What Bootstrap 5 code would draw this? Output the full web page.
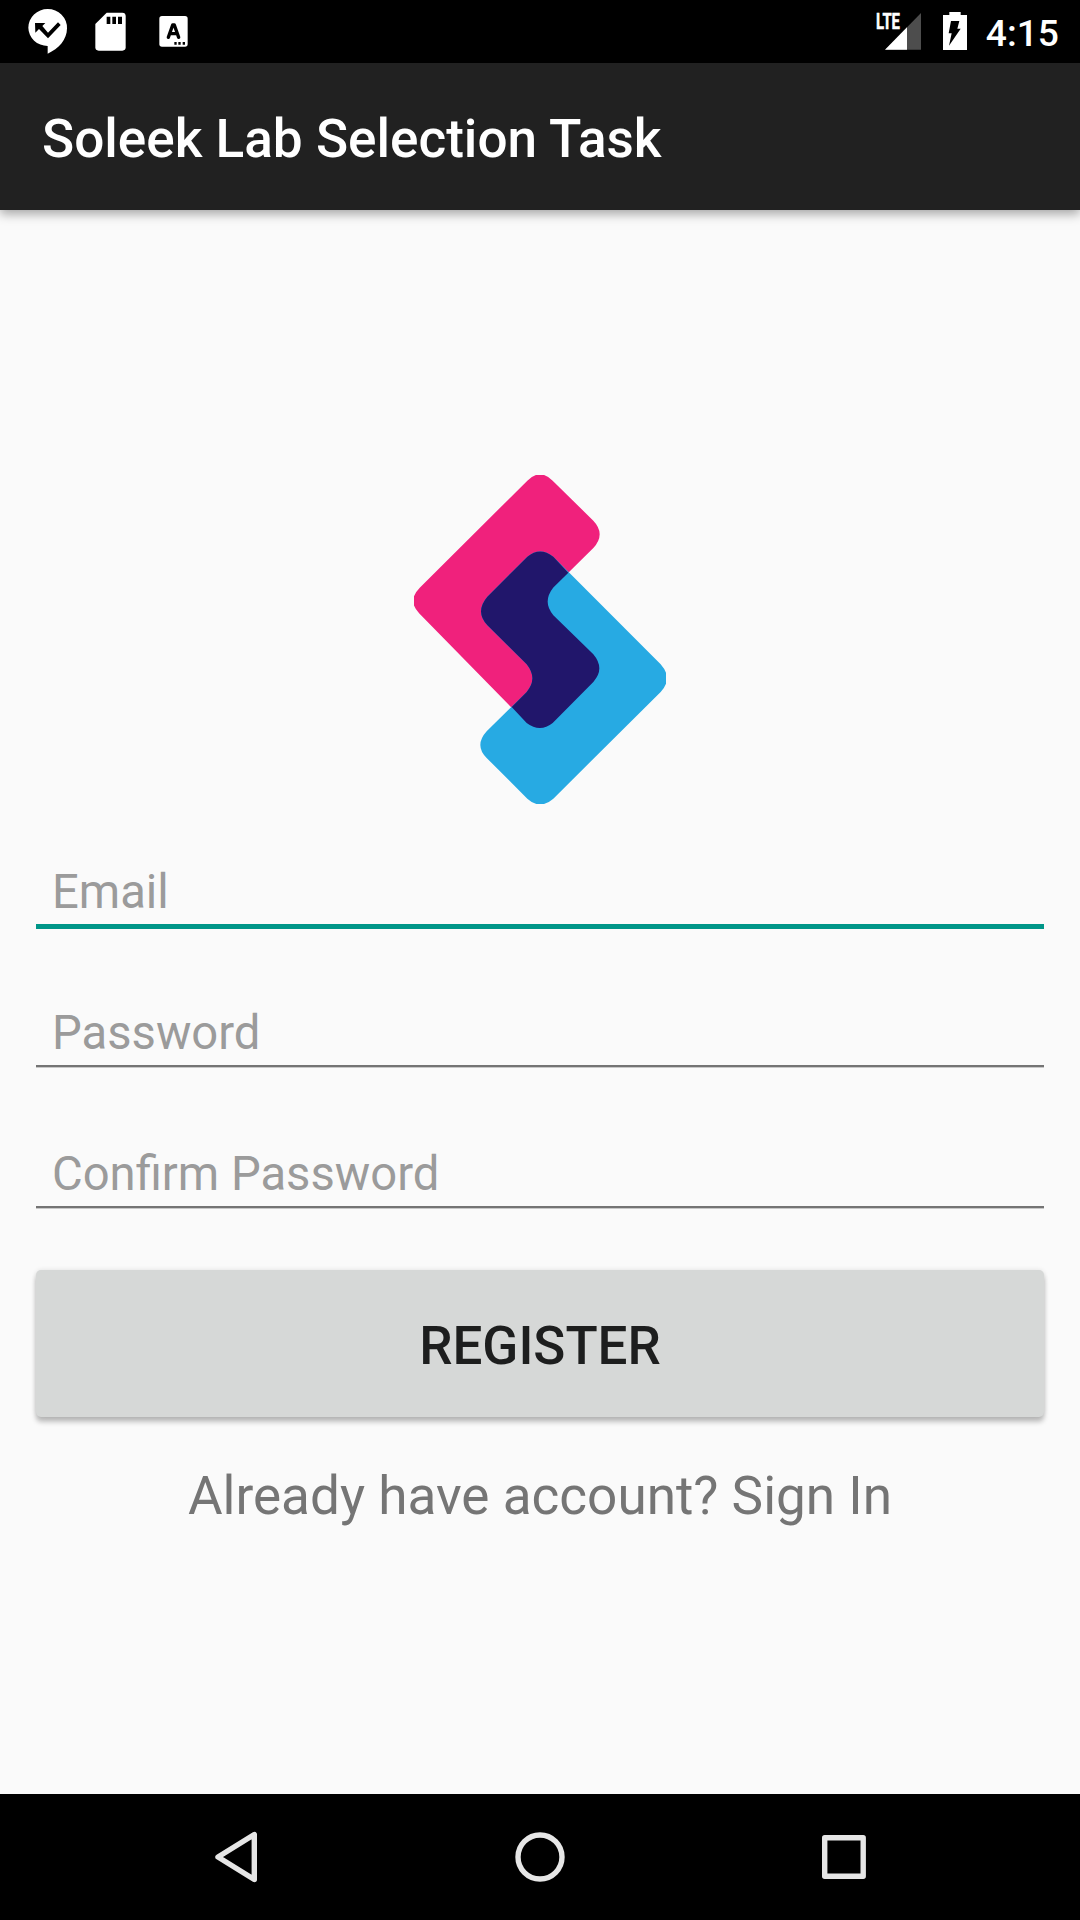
<!DOCTYPE html>
<html lang="en">
<head>
<meta charset="utf-8">
<meta name="viewport" content="width=device-width, initial-scale=1">
<title>Soleek Lab Selection Task</title>
<link href="https://cdn.jsdelivr.net/npm/bootstrap@5.3.0/dist/css/bootstrap.min.css" rel="stylesheet">
<style>
  body { font-family: Roboto, "Noto Sans", sans-serif; background: #fafafa; }
  .screen { width: 1080px; height: 1920px; }
  .status-bar { height: 63px; padding: 0 21px 0 16px; background: #000; color: #fff; }
  .status-bar svg { display: block; height: 63px; }
  .clock { font-size: 37.2px; font-weight: 500; line-height: 63px; padding-top: 2px; margin-left: 6px; height: 63px; }
  .app-bar { height: 147px; padding: 0 42px; background: #212121; box-shadow: 0 4px 10px rgba(0,0,0,.34); z-index: 1; }
  .app-title { font-size: 53.1px; font-weight: 500; line-height: 62px; color: #fff; margin: 4px 0 0; }
  .content { padding: 265px 36px 0; }
  .logo { width: 252px; height: 329px; }
  .fields { padding-top: 47px; }
  .field { height: 141px; }
  .field.last-field { height: 137px; }
  .field .form-control { height: 100%; padding: 9px 16px 0; border: 0; border-radius: 0; background: transparent; box-shadow: none; font-size: 47.2px; line-height: 56px; }
  .field .form-control::placeholder { color: #9b9b9b; opacity: 1; }
  .field-box { height: 75px; border-bottom: 2px solid #747474; box-shadow: 0 1px 0 #c8c8c8; }
  .field-box.active { border-bottom: 5px solid #009688; height: 78px; margin-bottom: -3px; box-shadow: none; }
  .btn-register { height: 147px; border: 0; border-radius: 5px; background: #d6d8d7; color: #1d1e1e; font-size: 52.9px; font-weight: 500; line-height: 62px; padding: 5px 0 0; box-shadow: 0 5px 5px rgba(0,0,0,.24), 0 0 5px rgba(0,0,0,.1); }
  .signin { font-size: 53.1px; line-height: 62px; color: #757575; margin-top: 48px; }
  .nav-keys { height: 126px; background: #000; }
  .nav-keys svg { width: 304px; height: 126px; fill: none; stroke: #e6e6e6; stroke-width: 5.4; stroke-linejoin: round; }
</style>
</head>
<body>
<div class="screen d-flex flex-column overflow-hidden">
  <header class="status-bar d-flex justify-content-between flex-shrink-0">
    <div class="d-flex">
      <svg width="63" viewBox="48 0 189 189">
        <path fill="#fff" d="M143 27a58 56 0 0 1 58 58c0 34-25 62-58 76v-23a58 56 0 0 1-58-55a58 56 0 0 1 58-56z"/>
        <path fill="#000" d="M105 69h31l-9 9 17 20 30-31 8 8-38 40-27-28-11 11z"/>
      </svg>
      <svg width="63" viewBox="237 0 189 189">
        <path fill="#fff" d="M320 38h47q10 0 10 10v94q0 10-10 10h-71q-10 0-10-10V72z"/>
        <path fill="#000" d="M320 50h11v22h-11zM337 50h11v22h-11zM354 50h12v22h-12z"/>
      </svg>
      <svg width="63" viewBox="426 0 189 189">
        <rect x="478" y="48" width="85" height="92" rx="8" fill="#fff"/>
        <path fill="none" stroke="#000" stroke-width="10" stroke-linecap="round" stroke-linejoin="round" d="M505 112l13-37h5l13 37M511 101h19"/>
        <path fill="#000" d="M523 126h7v8h-7zM535 126h7v8h-7zM548 126h7v8h-7z"/>
      </svg>
    </div>
    <div class="d-flex">
      <svg width="60" viewBox="30 0 180 189">
        <path fill="#4d4d4d" d="M183 39v110H75z"/>
        <path fill="#fff" d="M141 82v67H75z"/>
        <path fill="#000" d="M40 30h85v62H40z"/>
        <text x="48" y="87" textLength="72" lengthAdjust="spacingAndGlyphs" font-family="Roboto" font-weight="700" font-size="66" fill="#fff" stroke="#fff" stroke-width="1.500">LTE</text>
      </svg>
      <svg width="50" viewBox="210 0 150 189">
        <path fill="#fff" d="M249 45h19v-9h34v9h19v105h-72z"/>
        <path fill="#000" d="M273 63h25l-6 23h10l-35 51 8-37h-9z"/>
      </svg>
      <div class="clock">4:15</div>
    </div>
  </header>
  <nav class="app-bar d-flex align-items-center flex-shrink-0 position-relative">
    <h1 class="app-title">Soleek Lab Selection Task</h1>
  </nav>
  <main class="content flex-grow-1">
    <svg class="logo d-block mx-auto" viewBox="42 45 756 986" preserveAspectRatio="none">
      <path fill="#f0217c" d="M382 62Q420 24 458 62L580 182Q618 222 580 264L460 382Q426 425 460 465L580 582Q616 625 580 665L458 788Q420 818 380 788L58 460Q20 422 60 382z"/>
      <path fill="#27aae3" d="M382 290Q420 258 460 290L782 612Q820 655 782 695L460 1015Q420 1050 382 1015L260 893Q222 855 260 813L380 695Q414 655 380 612L262 495Q224 455 262 410z"/>
      <path fill="#21166b" d="M382 290Q420 258 460 290L505 338 460 382Q426 425 460 465L580 582Q616 625 580 665L458 788Q420 818 380 788L335 740 380 695Q414 655 380 612L262 495Q224 455 262 410z"/>
    </svg>
    <form class="fields">
      <div class="field"><div class="field-box active"><input class="form-control" type="email" placeholder="Email" aria-label="Email"></div></div>
      <div class="field"><div class="field-box"><input class="form-control" type="password" placeholder="Password" aria-label="Password"></div></div>
      <div class="field last-field"><div class="field-box"><input class="form-control" type="password" placeholder="Confirm Password" aria-label="Confirm Password"></div></div>
      <button class="btn btn-register w-100 d-block" type="button">REGISTER</button>
    </form>
    <div class="signin text-center">Already have account? Sign In</div>
  </main>
  <footer class="nav-keys d-flex justify-content-center flex-shrink-0">
    <svg viewBox="84 0 304 126"><path d="M254.300 40.500v45L218 63z"/></svg>
    <svg viewBox="388 0 304 126"><circle cx="540" cy="63" r="22"/></svg>
    <svg viewBox="692 0 304 126"><rect x="824.700" y="43.700" width="38.500" height="38.500"/></svg>
  </footer>
</div>
<script src="https://cdn.jsdelivr.net/npm/bootstrap@5.3.0/dist/js/bootstrap.bundle.min.js"></script>
</body>
</html>
